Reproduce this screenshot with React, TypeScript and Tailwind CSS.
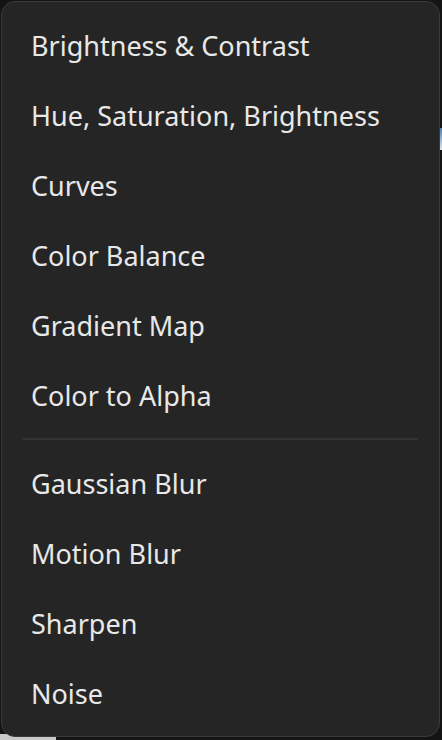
import React from 'react';

const groups: string[][] = [
  [
    'Brightness & Contrast',
    'Hue, Saturation, Brightness',
    'Curves',
    'Color Balance',
    'Gradient Map',
    'Color to Alpha',
  ],
  ['Gaussian Blur', 'Motion Blur', 'Sharpen', 'Noise'],
];

export default function App() {
  return (
    <div className="relative w-[442px] h-[740px] overflow-hidden bg-[#141414]">
      {/* bits of the canvas behind the menu */}
      <div className="absolute left-0 bottom-0 w-[56px] h-[6px] bg-[#c9c9c9]" />
      <div className="absolute right-0 top-[128px] w-[4px] h-[22px] bg-gradient-to-b from-[#4a7fb5] to-[#dfe8f0]" />

      <div
        className="absolute left-[1px] top-[1px] w-[439px] h-[736px] rounded-[14px] border border-[#3a3a3a] bg-[#252525] pt-[8px] pb-[8px] text-[#e8e8e8]"
        style={{ fontFamily: '"Noto Sans", "Open Sans", sans-serif' }}
        role="menu"
      >
        {groups.map((items, gi) => (
          <div key={gi}>
            {gi > 0 && <div className="mx-[21px] mt-[8px] mb-[8px] h-[2px] bg-[#333333]" />}
            {items.map((label) => (
              <div
                key={label}
                role="menuitem"
                className="h-[70px] flex items-center pl-[29px] pr-[20px] text-[27px] leading-none cursor-default whitespace-nowrap"
              >
                {label}
              </div>
            ))}
          </div>
        ))}
      </div>
    </div>
  );
}
